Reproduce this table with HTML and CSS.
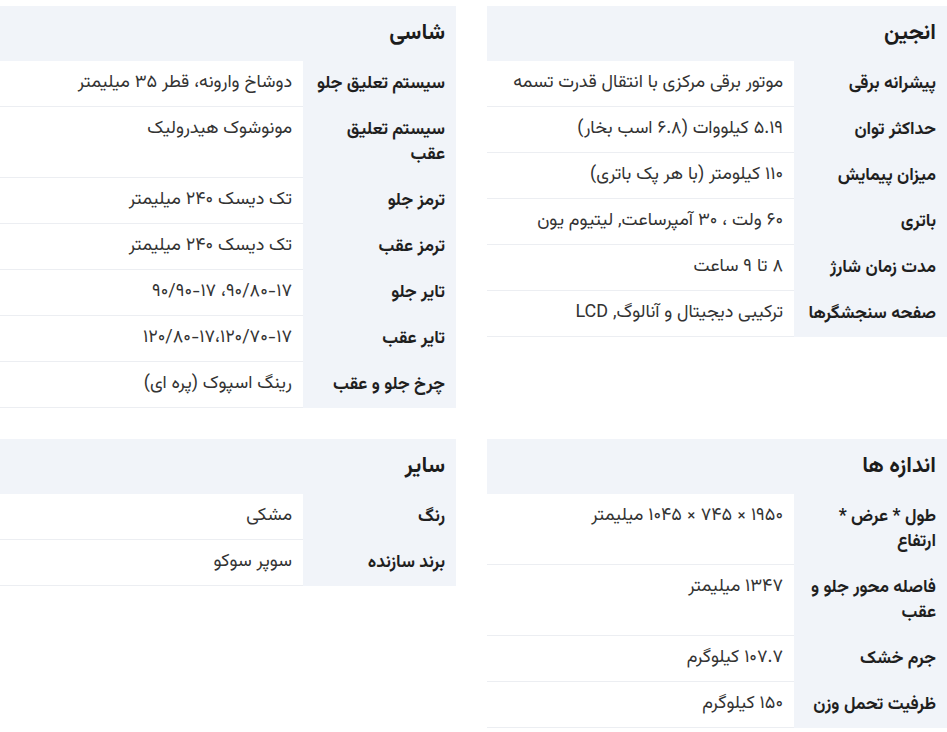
FILE: index.html
```html
<!DOCTYPE html>
<html lang="fa" dir="rtl">
<head>
<meta charset="utf-8">
<title>مشخصات فنی</title>
<link rel="stylesheet" href="styles.css">
</head>
<body>
<div class="specs">
  <section class="spec">
    <h3 class="spec-title">انجین</h3>
    <table class="spec-table">
      <tr><th>پیشرانه برقی</th><td>موتور برقی مرکزی با انتقال قدرت تسمه</td></tr>
      <tr><th>حداکثر توان</th><td>۵.۱۹ کیلووات (۶.۸ اسب بخار)</td></tr>
      <tr><th>میزان پیمایش</th><td>۱۱۰ کیلومتر (با هر پک باتری)</td></tr>
      <tr><th>باتری</th><td>۶۰ ولت ، ۳۰ آمپرساعت, لیتیوم یون</td></tr>
      <tr><th>مدت زمان شارژ</th><td>۸ تا ۹ ساعت</td></tr>
      <tr><th>صفحه سنجشگرها</th><td>ترکیبی دیجیتال و آنالوگ, LCD</td></tr>
    </table>
  </section>
  <section class="spec">
    <h3 class="spec-title">شاسی</h3>
    <table class="spec-table">
      <tr><th>سیستم تعلیق جلو</th><td>دوشاخ وارونه، قطر ۳۵ میلیمتر</td></tr>
      <tr><th>سیستم تعلیق عقب</th><td>مونوشوک هیدرولیک</td></tr>
      <tr><th>ترمز جلو</th><td>تک دیسک ۲۴۰ میلیمتر</td></tr>
      <tr><th>ترمز عقب</th><td>تک دیسک ۲۴۰ میلیمتر</td></tr>
      <tr><th>تایر جلو</th><td>۹۰/۸۰-۱۷، ۹۰/۹۰-۱۷</td></tr>
      <tr><th>تایر عقب</th><td>۱۲۰/۸۰-۱۷،۱۲۰/۷۰-۱۷</td></tr>
      <tr><th>چرخ جلو و عقب</th><td>رینگ اسپوک (پره ای)</td></tr>
    </table>
  </section>
  <section class="spec">
    <h3 class="spec-title">اندازه ها</h3>
    <table class="spec-table">
      <tr><th>طول * عرض * ارتفاع</th><td>۱۹۵۰ × ۷۴۵ × ۱۰۴۵ میلیمتر</td></tr>
      <tr><th>فاصله محور جلو و عقب</th><td>۱۳۴۷ میلیمتر</td></tr>
      <tr><th>جرم خشک</th><td>۱۰۷.۷ کیلوگرم</td></tr>
      <tr><th>ظرفیت تحمل وزن</th><td>۱۵۰ کیلوگرم</td></tr>
    </table>
  </section>
  <section class="spec">
    <h3 class="spec-title">سایر</h3>
    <table class="spec-table">
      <tr><th>رنگ</th><td>مشکی</td></tr>
      <tr><th>برند سازنده</th><td>سوپر سوکو</td></tr>
    </table>
  </section>
</div>
</body>
</html>
```
FILE: styles.css
```css
html, body {
  margin: 0;
  padding: 0;
  background: #ffffff;
}

body {
  font-family: "Vazirmatn", "Noto Sans Arabic", "DejaVu Sans", sans-serif;
  color: #2b2b2b;
  direction: rtl;
}

.specs {
  display: grid;
  grid-template-columns: 460px 456px;
  column-gap: 31px;
  row-gap: 31px;
  align-items: start;
  padding-top: 6px;
}

.spec-title {
  margin: 0;
  height: 55px;
  padding: 0 11px;
  display: flex;
  align-items: center;
  background: #f1f4f9;
  font-size: 22px;
  font-weight: 700;
  color: #1c1c1c;
}

.spec-table {
  width: 100%;
  border-collapse: separate;
  border-spacing: 0;
}

.spec-table th,
.spec-table td {
  padding: 10px 11px;
  line-height: 25px;
  vertical-align: top;
  text-align: right;
}

.spec-table th {
  width: 131px;
  background: #f1f4f9;
  font-size: 17.5px;
  font-weight: 700;
  color: #1f1f1f;
  border-bottom: 1px solid #f1f4f9;
}

.spec-table td {
  font-size: 18px;
  font-weight: 400;
  color: #333333;
  border-bottom: 1px solid #eceef2;
}
```
